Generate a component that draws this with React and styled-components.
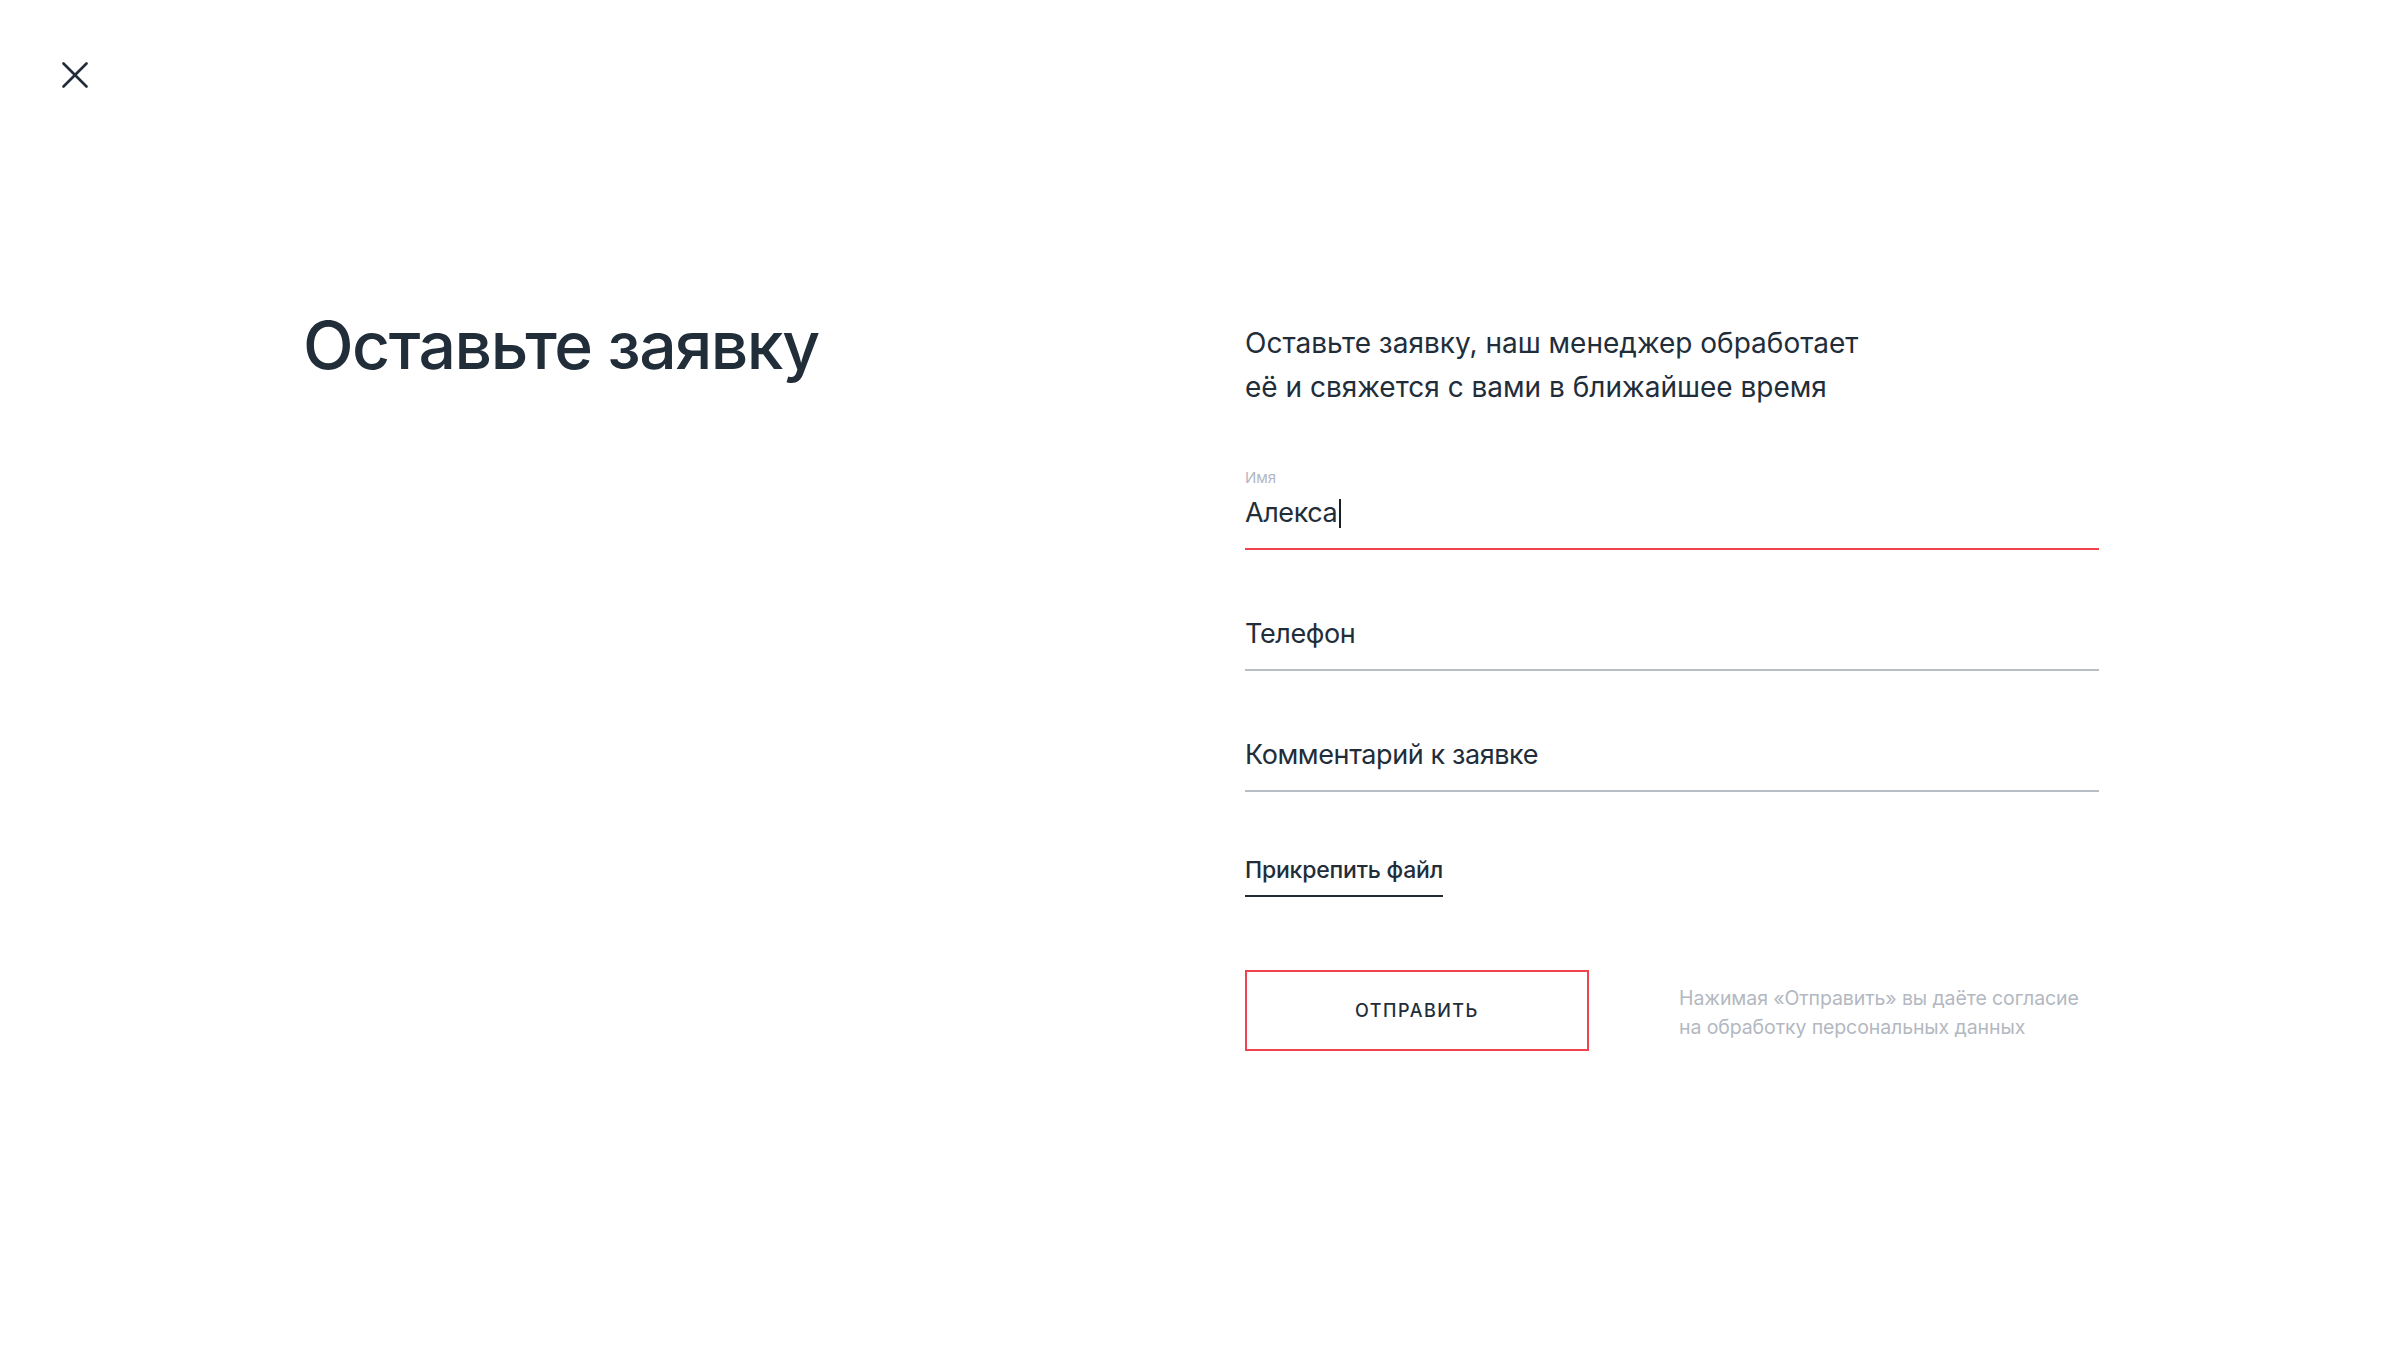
import React from "react";
import styled, { createGlobalStyle } from "styled-components";

const GlobalStyle = createGlobalStyle`
  html, body {
    margin: 0;
    padding: 0;
    background: #ffffff;
  }
  body {
    font-family: Inter, "Noto Sans", sans-serif;
    color: #222d3a;
  }
  * { box-sizing: border-box; }
`;

const Page = styled.div`
  width: 2400px;
  min-height: 1351px;
  background: #fff;
  display: flex;
  flex-direction: column;
`;

const Header = styled.header`
  display: flex;
  padding: 62px 0 0 62px;
`;

const CloseButton = styled.button`
  width: 26px;
  height: 26px;
  padding: 0;
  border: 0;
  background: transparent;
  cursor: pointer;
  display: flex;
  svg { display: block; }
`;

const Main = styled.main`
  display: flex;
  align-items: flex-start;
  padding: 215px 0 0 302px;
`;

const LeftCol = styled.div`
  width: 943px;
  flex-shrink: 0;
`;

const Title = styled.h1`
  margin: 3px 0 0 1px;
  font-size: 66px;
  line-height: 1.2;
  font-weight: 500;
  letter-spacing: -1.5px;
  color: #222d3a;
`;

const RightCol = styled.div`
  width: 854px;
  padding-top: 18px;
  display: flex;
  flex-direction: column;
`;

const Lead = styled.p`
  margin: 0 0 59px;
  font-size: 28px;
  line-height: 44px;
  font-weight: 400;
  color: #222d3a;
`;

const Fields = styled.div`
  display: flex;
  flex-direction: column;
  gap: 39px;
`;

const Field = styled.label`
  display: flex;
  flex-direction: column;
  gap: 8px;
  padding-bottom: 18px;
  border-bottom: 2px solid ${(p) => (p.$active ? "#f0434f" : "#b9bdc5")};
`;

const FieldLabel = styled.span`
  font-size: 15px;
  line-height: 20px;
  color: #b3b8c1;
  visibility: ${(p) => (p.$shown ? "visible" : "hidden")};
`;

const InputText = styled.span`
  display: flex;
  align-items: center;
  font-size: 27px;
  line-height: 34px;
  letter-spacing: -0.4px;
  color: #222d3a;
`;

const Caret = styled.span`
  display: inline-block;
  width: 2px;
  height: 29px;
  margin-left: 2px;
  background: #1a1f26;
`;

const AttachRow = styled.div`
  display: flex;
  margin-top: 63px;
`;

const AttachLink = styled.a`
  font-size: 23px;
  line-height: 30px;
  font-weight: 500;
  letter-spacing: -0.2px;
  color: #222d3a;
  text-decoration: none;
  padding-bottom: 10px;
  border-bottom: 2px solid #222d3a;
  cursor: pointer;
`;

const SubmitRow = styled.div`
  display: flex;
  align-items: center;
  gap: 90px;
  margin-top: 73px;
`;

const SubmitButton = styled.button`
  width: 344px;
  height: 81px;
  flex-shrink: 0;
  border: 2px solid #f0434f;
  background: #fff;
  font-family: Inter, "Noto Sans", sans-serif;
  font-size: 18px;
  font-weight: 500;
  letter-spacing: 1.5px;
  color: #222d3a;
  text-transform: uppercase;
  cursor: pointer;
`;

const Consent = styled.p`
  margin: 4px 0 0;
  font-size: 19.5px;
  line-height: 29px;
  letter-spacing: -0.1px;
  color: #b3b8c1;
`;

const CloseIcon = () => (
  <svg width="26" height="26" viewBox="0 0 26 26" fill="none">
    <path
      d="M1.5 1.5L24.5 24.5M24.5 1.5L1.5 24.5"
      stroke="#222d3a"
      strokeWidth="2.6"
      strokeLinecap="round"
    />
  </svg>
);

const fields = [
  { label: "Имя", value: "Алекса", active: true },
  { label: "Телефон", value: "Телефон", active: false },
  { label: "Комментарий к заявке", value: "Комментарий к заявке", active: false },
];

export default function App() {
  return (
    <>
      <GlobalStyle />
      <Page>
        <Header>
          <CloseButton aria-label="Закрыть">
            <CloseIcon />
          </CloseButton>
        </Header>
        <Main>
          <LeftCol>
            <Title>Оставьте заявку</Title>
          </LeftCol>
          <RightCol>
            <Lead>
              Оставьте заявку, наш менеджер обработает
              <br />
              её и свяжется с вами в ближайшее время
            </Lead>
            <Fields>
              {fields.map((f) => (
                <Field key={f.label} $active={f.active}>
                  <FieldLabel $shown={f.active}>{f.label}</FieldLabel>
                  <InputText>
                    {f.value}
                    {f.active && <Caret />}
                  </InputText>
                </Field>
              ))}
            </Fields>
            <AttachRow>
              <AttachLink>Прикрепить файл</AttachLink>
            </AttachRow>
            <SubmitRow>
              <SubmitButton>Отправить</SubmitButton>
              <Consent>
                Нажимая «Отправить» вы даёте согласие
                <br />
                на обработку персональных данных
              </Consent>
            </SubmitRow>
          </RightCol>
        </Main>
      </Page>
    </>
  );
}
